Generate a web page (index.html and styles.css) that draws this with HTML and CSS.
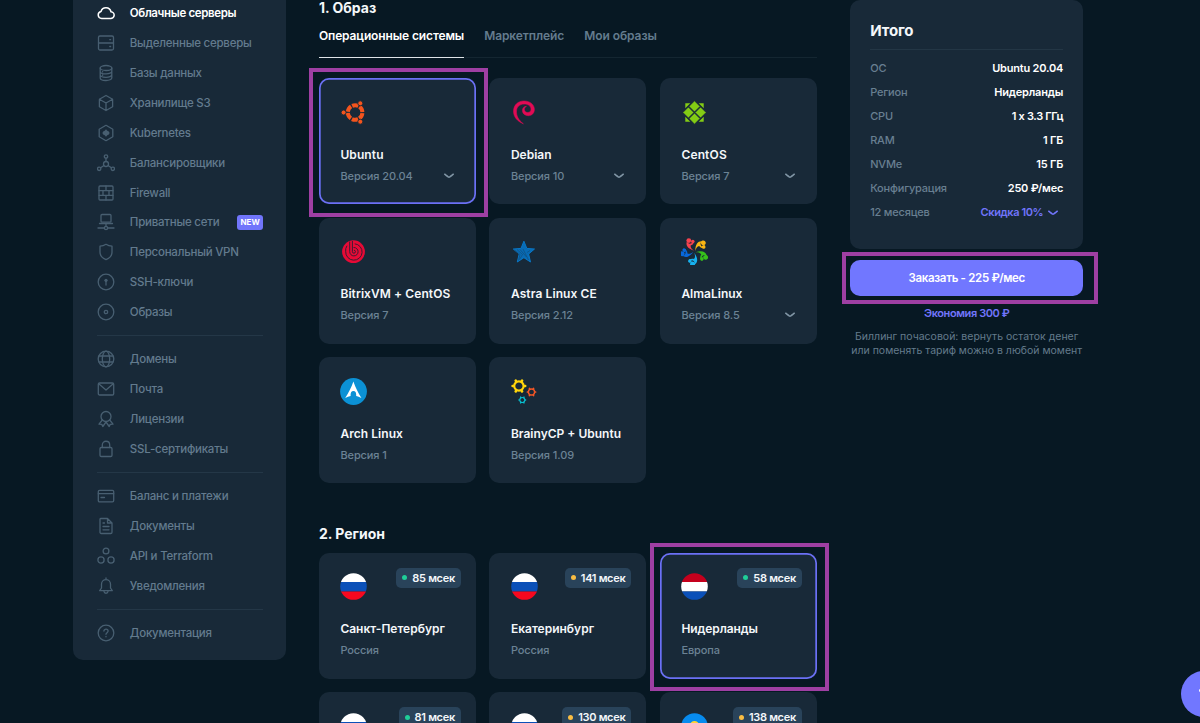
FILE: index.html
```html
<!DOCTYPE html>
<html lang="ru">
<head>
<meta charset="utf-8">
<title>Облачные серверы</title>
<link rel="stylesheet" href="styles.css">
</head>
<body>
<svg class="defs" aria-hidden="true">
  <symbol id="chev" viewBox="0 0 12 8"><path d="M1.700 2.200Q5.300 5.200 6 5.200Q6.700 5.200 10.300 2.200" fill="none" stroke="currentColor" stroke-width="1.500" stroke-linecap="round"/></symbol>
  <symbol id="flag-ru" viewBox="0 0 27 27"><clipPath id="c1"><circle cx="13.5" cy="13.5" r="13.3"/></clipPath><g clip-path="url(#c1)"><path fill="#fff" d="M0 0h27v9H0z"/><path fill="#0b50b8" d="M0 9h27v9.5H0z"/><path fill="#f6081f" d="M0 18.5h27V27H0z"/></g></symbol>
</svg>
<div class="page">
  <nav class="side">
    <a class="item active"><svg viewBox="0 0 18 18"><path d="M4.700 14.500h8.800a3.400 3.400 0 0 0 .5-6.800A5.200 5.200 0 0 0 4 7.400a3.600 3.600 0 0 0 .7 7.100z"/></svg><span>Облачные серверы</span></a>
    <a class="item"><svg viewBox="0 0 18 18"><rect x="1.5" y="2" width="15" height="14" rx="1.5"/><path d="M1.500 9h15M12.800 5.700h.8M12.800 12.500h.8"/></svg><span>Выделенные серверы</span></a>
    <a class="item"><svg viewBox="0 0 18 18"><ellipse cx="9" cy="4" rx="5.800" ry="2.500"/><path d="M3.200 4v10c0 1.400 2.600 2.500 5.800 2.500s5.800-1.100 5.800-2.500V4M3.200 7.400c0 1.400 2.600 2.500 5.800 2.500s5.800-1.100 5.800-2.500M3.200 10.800c0 1.400 2.600 2.500 5.800 2.500s5.800-1.100 5.800-2.500M5.600 7.600v.3M5.600 11v.3"/></svg><span>Базы данных</span></a>
    <a class="item"><svg viewBox="0 0 18 18"><path d="M9 1.500l6.600 3.700v7.600L9 16.500l-6.600-3.700V5.200zM2.400 5.200L9 9l6.600-3.800M9 9v7.500"/></svg><span>Хранилище S3</span></a>
    <a class="item"><svg viewBox="0 0 18 18"><path d="M9 1.300l6.800 3.900v7.600L9 16.700l-6.800-3.900V5.200z"/><path class="solid" d="M9 5.200l1.300 1.500 1.500.9.800 1.400-.8 1.400-1.500.9L9 12.800l-1.300-1.500-1.500-.9L5.400 9l.8-1.400 1.500-.9z"/></svg><span>Kubernetes</span></a>
    <a class="item"><svg viewBox="0 0 18 18"><circle cx="9" cy="2.500" r="1.700"/><circle cx="9" cy="10" r="2.500"/><circle cx="2.200" cy="14.800" r="1.700"/><circle cx="15.800" cy="14.800" r="1.700"/><path d="M9 4.200v3.300M7 11.500l-3.400 2.300M11 11.500l3.400 2.300"/></svg><span>Балансировщики</span></a>
    <a class="item"><svg viewBox="0 0 18 18"><rect x="2" y="2" width="14" height="14" rx="1"/><path d="M2 6.700h14M2 11.300h14M9 2v4.700M6 6.700v4.600M12 6.700v4.600M9 11.300V16"/></svg><span>Firewall</span></a>
    <a class="item"><svg viewBox="0 0 18 18"><rect x="4" y="1.500" width="10" height="7.700" rx="1"/><path d="M2.500 10.500h13M9 10.500v3M1 15h6.200M10.800 15H17"/><circle cx="9" cy="15" r="1.600"/></svg><span>Приватные сети</span><b class="new">NEW</b></a>
    <a class="item"><svg viewBox="0 0 18 18"><path d="M9 1.300c2 1.300 4 1.800 6 1.900v6c0 3.600-2.500 6-6 7.500-3.500-1.500-6-3.900-6-7.500v-6c2-.1 4-.6 6-1.900z"/></svg><span>Персональный VPN</span></a>
    <a class="item"><svg viewBox="0 0 18 18"><circle cx="9" cy="9" r="7.800"/><circle class="solid" cx="9" cy="7.300" r="1.600"/><path d="M9 7.500V12"/></svg><span>SSH-ключи</span></a>
    <a class="item"><svg viewBox="0 0 18 18"><circle cx="9" cy="9" r="7.800"/><circle cx="9" cy="9" r="1.700"/></svg><span>Образы</span></a>
    <hr>
    <a class="item"><svg viewBox="0 0 18 18"><circle cx="9" cy="9" r="7.800"/><ellipse cx="9" cy="9" rx="3.700" ry="7.800"/><path d="M2.200 6h13.600M2.200 12h13.600"/></svg><span>Домены</span></a>
    <a class="item"><svg viewBox="0 0 18 18"><rect x="1.300" y="3" width="15.400" height="12" rx="1.300"/><path d="M2 4l7 6 7-6"/></svg><span>Почта</span></a>
    <a class="item"><svg viewBox="0 0 18 18"><circle cx="9" cy="6.500" r="5"/><path d="M5.300 10l-3.300 4.200 2.800.2 1 2.100L9 12l3.200 4.500 1-2.100 2.800-.2-3.300-4.200"/></svg><span>Лицензии</span></a>
    <a class="item"><svg viewBox="0 0 18 18"><rect x="3" y="7.500" width="12" height="9" rx="1.300"/><path d="M5.300 7.500V5c0-5 7.400-5 7.400 0v2.500"/></svg><span>SSL-сертификаты</span></a>
    <hr>
    <a class="item"><svg viewBox="0 0 18 18"><rect x="1.300" y="3.300" width="15.400" height="11.500" rx="1.300"/><path d="M1.300 6.700h15.400M4 10.500h3.500"/></svg><span>Баланс и платежи</span></a>
    <a class="item"><svg viewBox="0 0 18 18"><path d="M3.700 1.500h6.800l4.500 4.500v9.200c0 .8-.5 1.300-1.300 1.300H4.300c-.8 0-1.300-.5-1.300-1.300V2.200c0-.5.2-.7.700-.7zM10.500 1.500V6H15M6 6h1.500M6 9.500h6M6 12.800h6"/></svg><span>Документы</span></a>
    <a class="item"><svg viewBox="0 0 18 18"><circle cx="9" cy="4" r="2.900"/><circle cx="4" cy="13" r="3.100"/><circle cx="14" cy="13" r="3.100"/></svg><span>API и Terraform</span></a>
    <a class="item"><svg viewBox="0 0 18 18"><path d="M9 1v1.700M4.500 11V7.200C4.500 4.500 6.500 2.700 9 2.700s4.500 1.800 4.500 4.500V11l1.800 2.700H2.700zM7 14.500c.2 2.300 3.800 2.300 4 0"/></svg><span>Уведомления</span></a>
    <hr>
    <a class="item"><svg viewBox="0 0 18 18"><circle cx="9" cy="9" r="7.800"/><path d="M6.900 7.100c0-2.600 4.200-2.500 4.200 0 0 1.500-2.100 1.600-2.100 3.200M9 12.400v.4"/></svg><span>Документация</span></a>
  </nav>

  <main class="main">
    <h2 class="h-image">1. Образ</h2>
    <div class="tabs"><span class="tab on">Операционные системы</span><span class="tab">Маркетплейс</span><span class="tab">Мои образы</span></div>
    <div class="grid">
      <div class="card sel"><div class="mark"></div>
        <svg class="logo" viewBox="0 0 27 27"><g transform="translate(.8 0)"><circle cx="14.300" cy="13.500" r="7.300" fill="none" stroke="#f4541d" stroke-width="4" stroke-dasharray="6.400 1.245" stroke-dashoffset="-.6"/><g fill="#f4541d" stroke="#182938" stroke-width=".9"><circle cx="2.800" cy="13.500" r="2.500"/><circle cx="19.500" cy="4.300" r="2.500"/><circle cx="19.500" cy="22.700" r="2.500"/></g></g></svg>
        <h3 class="n-ubuntu">Ubuntu</h3><p><span>Версия 20.04</span><svg class="chev"><use href="#chev"/></svg></p></div>
      <div class="card">
        <svg class="logo" viewBox="0 0 27 27"><path d="M12.400 24.800C6 22.200 2.300 17.500 2.500 11.800 2.800 5.800 7 2 13 2c6.200 0 10.400 3.700 10.400 8.500 0 3.600-2.600 6.200-6.100 6.200-3.300 0-5.900-2.200-5.900-5.200 0-2.400 1.700-4.100 4.100-4.200-1.600.8-2.200 2-2.100 3.300.2 1.900 1.700 3 3.500 2.900 2-.1 3.200-1.500 3.100-3.500-.2-3-2.800-4.900-6.700-4.900-4.600 0-7.600 2.700-7.800 6.900-.2 5 2.200 9.400 6.900 12.800z" fill="#e10b55" stroke="#e10b55" stroke-width=".5"/></svg>
        <h3 class="n-debian">Debian</h3><p><span>Версия 10</span><svg class="chev"><use href="#chev"/></svg></p></div>
      <div class="card">
        <svg class="logo" viewBox="0 0 27 27"><g fill="#83cc14"><path d="M4.300 4.300h5L4.300 9.300zM22.700 4.300v5l-5-5zM4.300 22.700v-5l5 5zM22.700 22.700h-5l5-5z"/><g stroke="#182938" stroke-width=".9" stroke-linejoin="round"><path d="M13.500 1.800l5.600 5.600-5.600 5.600-5.600-5.600zM13.500 14l5.600 5.600-5.600 5.600-5.600-5.600zM7.400 7.900l5.600 5.600-5.600 5.600-5.600-5.600zM19.600 7.900l5.600 5.600-5.600 5.600-5.600-5.600z"/></g></g></svg>
        <h3 class="n-centos">CentOS</h3><p><span>Версия 7</span><svg class="chev"><use href="#chev"/></svg></p></div>
      <div class="card">
        <svg class="logo" viewBox="0 0 27 27"><circle cx="13.500" cy="13.700" r="11.400" fill="#e70a36"/><g fill="none" stroke="#3a1c33" stroke-width="1"><path d="M9.700 3.500v10.200a4.200 4.200 0 1 0 4.200-4.200h-.4"/><path d="M12.400 3v10.700a1.500 1.500 0 1 0 1.500-1.500"/><path d="M7 7.700a8.500 8.500 0 0 0-1.300 6 8.200 8.200 0 1 0 9-7.900"/></g></svg>
        <h3 class="n-bitrix">BitrixVM + CentOS</h3><p><span>Версия 7</span></p></div>
      <div class="card">
        <svg class="logo" viewBox="0 0 27 27"><path d="M12.900 3.200l2.900 7.200 7.700.6-5.900 5 1.900 8-6.600-4.300L6.300 24l1.900-8-5.900-5 7.700-.6z" fill="#086bb5" stroke="#0876c5" stroke-linejoin="round"/><path d="M3.500 12l5.500 4.500-1.500 6M6 11.500l5.500 5-3 5M9 11.500l6.500 7.500M12 11l5.500 11M19 12.500l-3 2" fill="none" stroke="#174264" stroke-width=".5"/></svg>
        <h3 class="n-astra">Astra Linux CE</h3><p><span>Версия 2.12</span></p></div>
      <div class="card">
        <svg class="logo" viewBox="0 0 27 27"><defs><g id="alma"><path d="M13.100 12.700C6.300 10.500 4.400 6.800 6 3.300c.6 1.700 1.700 2.600 3.700 2.300L13 4c-.5 2-1.900 3.200-3.400 3.500-.1 2.100.9 3.500 3.500 5.200z"/><circle cx="7.800" cy="2.600" r="2.400"/><circle cx="11.800" cy="3.500" r="1.800"/></g></defs><use href="#alma" fill="#f6424e"/><use href="#alma" fill="#f9b513" transform="rotate(72 13.500 13.700)"/><use href="#alma" fill="#36c21b" transform="rotate(144 13.500 13.700)"/><use href="#alma" fill="#17b2f0" transform="rotate(216 13.500 13.700)"/><use href="#alma" fill="#0868db" transform="rotate(288 13.500 13.700)"/></svg>
        <h3 class="n-alma">AlmaLinux</h3><p><span>Версия 8.5</span><svg class="chev"><use href="#chev"/></svg></p></div>
      <div class="card">
        <svg class="logo" viewBox="0 0 27 27"><circle cx="13.500" cy="13.500" r="13.400" fill="#0b91d5"/><path d="M13.400 3.500c2.200 6.200 4.600 11.300 8 16.500-2-.9-3.600-1.500-5.200-1.900.3-3.200-.7-5.100-2.800-5.100s-3.100 1.900-2.800 5.100c-1.700.4-3.500 1.100-5.400 1.900 3.500-5.200 6-10.300 8.200-16.500z" fill="#fff"/></svg>
        <h3 class="n-arch">Arch Linux</h3><p><span>Версия 1</span></p></div>
      <div class="card">
        <svg class="logo" viewBox="0 0 27 27"><defs><g id="gear"><circle r="4.700" fill="none" stroke="currentColor" stroke-width="2.200"/><path d="M5.800 0h.5M-5.800 0h-.5M2.900-5l.3-.5M-2.900-5l-.3-.5M2.900 5l.3.5M-2.900 5l-.3.5" stroke="currentColor" stroke-width="2.600" stroke-linecap="round"/></g></defs><use href="#gear" color="#ffd50b" transform="translate(7.900 8)"/><use href="#gear" color="#f35726" transform="translate(20.500 14) scale(.65)"/><use href="#gear" color="#08bfd0" transform="translate(11.300 22) scale(.53)"/></svg>
        <h3 class="n-brainy">BrainyCP + Ubuntu</h3><p><span>Версия 1.09</span></p></div>
    </div>
    <h2 class="h-region">2. Регион</h2>
    <div class="grid">
      <div class="card"><svg class="logo"><use href="#flag-ru"/></svg><b class="ping">85 мсек</b><h3>Санкт-Петербург</h3><p><span>Россия</span></p></div>
      <div class="card"><svg class="logo"><use href="#flag-ru"/></svg><b class="ping slow">141 мсек</b><h3>Екатеринбург</h3><p><span>Россия</span></p></div>
      <div class="card sel"><div class="mark"></div><svg class="logo" viewBox="0 0 27 27"><g clip-path="url(#c1)"><path fill="#c5001d" d="M0 0h27v9H0z"/><path fill="#fff" d="M0 9h27v9.500H0z"/><path fill="#0b50b8" d="M0 18.500h27V27H0z"/></g></svg><b class="ping">58 мсек</b><h3 class="n-nl">Нидерланды</h3><p><span>Европа</span></p></div>
      <div class="card"><svg class="logo"><use href="#flag-ru"/></svg><b class="ping">81 мсек</b></div>
      <div class="card"><svg class="logo"><use href="#flag-ru"/></svg><b class="ping slow">130 мсек</b></div>
      <div class="card"><svg class="logo" viewBox="0 0 27 27"><circle cx="13.500" cy="13.500" r="13.300" fill="#078bee"/><circle cx="13.500" cy="12.500" r="4.500" fill="#ffd432"/></svg><b class="ping slow">138 мсек</b></div>
    </div>
  </main>

  <aside class="order">
    <section class="total">
      <h2>Итого</h2>
      <dl>
        <div><dt>ОС</dt><dd>Ubuntu 20.04</dd></div>
        <div><dt>Регион</dt><dd>Нидерланды</dd></div>
        <div><dt>CPU</dt><dd class="cpu">1 x 3.3 ГГц</dd></div>
        <div><dt>RAM</dt><dd>1 ГБ</dd></div>
        <div><dt>NVMe</dt><dd>15 ГБ</dd></div>
        <div><dt>Конфигурация</dt><dd>250 ₽/мес</dd></div>
        <div><dt>12 месяцев</dt><dd class="sale">Скидка 10%<svg class="chev"><use href="#chev"/></svg></dd></div>
      </dl>
    </section>
    <div class="buy"><div class="mark"></div><button>Заказать - 225 ₽/мес</button></div>
    <div class="save">Экономия 300 ₽</div>
    <div class="note"><span>Биллинг почасовой: вернуть остаток денег</span><br><span>или поменять тариф можно в любой момент</span></div>
  </aside>
</div>
<div class="chat"><i></i></div>
</body>
</html>
```
FILE: styles.css
```css
* { box-sizing: border-box; }
html, body { height: 723px; overflow: hidden; }
body { margin: 0; background: #071823; font-family: Inter, "Noto Sans", sans-serif; color: #f4f7fa; position: relative; }
.defs { position: absolute; width: 0; height: 0; }
h2, h3, p, dl, dd { margin: 0; }
.page { display: grid; grid-template-columns: 212.300px 498px 233px; column-gap: 33.300px; padding-left: 73.300px; align-items: start; height: 723px; overflow: hidden; }

.side { height: 659.500px; background: #182938; border-radius: 0 0 10px 10px; padding: 0 22.500px 0 24px; overflow: hidden; }
.side::before { content: ""; display: block; margin-top: -1.700px; }
.item { display: flex; align-items: center; height: 29.900px; color: #637b8e; font-size: 11.500px; letter-spacing: -.23px; font-weight: 500; white-space: nowrap; }
.item svg { flex: none; width: 18px; height: 18px; margin-right: 14.500px; fill: none; stroke: #485f71; stroke-width: 1.300; stroke-linejoin: round; stroke-linecap: round; }
.item svg .solid { fill: #485f71; stroke: none; }
.item.active { color: #fff; font-weight: 600; letter-spacing: -.35px; }
.item.active svg { stroke: #fff; stroke-width: 1.500; }
.side hr { border: 0; border-top: 1px solid #243747; margin: 8px 0 8.300px; }
.new { margin-left: auto; width: 26px; height: 15px; border-radius: 3px; background: #7175fb; color: #fff; font-size: 8px; font-weight: 700; line-height: 15px; letter-spacing: 0; text-align: center; }

.main h2 { font-size: 14px; line-height: 18px; font-weight: 700; }
.main .h-image { line-height: 15px; height: 16px; }
.tabs { display: flex; gap: 20px; height: 42px; border-bottom: 1px solid #142631; margin-bottom: 20px; padding-top: 10px; letter-spacing: -.08px; }
.tab { height: 32px; line-height: 19px; font-size: 12px; font-weight: 600; color: #647c8e; white-space: nowrap; }
.tab.on { color: #fff; border-bottom: 1px solid #dfe4e8; letter-spacing: -.12px; }
.grid { display: grid; grid-template-columns: repeat(3, 1fr); grid-auto-rows: 126px; gap: 13.500px; }
.card { position: relative; background: #182938; border-radius: 10px; padding: 20.500px 21px 0 21.500px; }
.card.sel { box-shadow: inset 0 0 0 1.700px #6b70f5; z-index: 1; }
.mark { position: absolute; inset: -10px -12px -12.500px -10px; border: 4px solid #9e3fa3; }
.logo { display: block; width: 27px; height: 27px; }
.card h3 { font-size: 12px; line-height: 18px; font-weight: 600; margin-top: 20.300px; white-space: nowrap; }
.card .n-ubuntu { letter-spacing: .1px; }
.card .n-centos { letter-spacing: .15px; }
.card .n-bitrix { letter-spacing: .08px; }
.card .n-astra { letter-spacing: .1px; }
.card .n-arch { letter-spacing: .05px; }
.card .n-nl { letter-spacing: -.1px; }
.card p { display: flex; justify-content: space-between; align-items: center; font-size: 11px; line-height: 18px; letter-spacing: -.1px; font-weight: 500; color: #6b8294; margin-top: 3px; }
.chev { width: 12px; height: 8px; color: #8095a5; }
.main .h-region { margin: 41.500px 0 10px; }
.ping { position: absolute; right: 15px; top: 15px; height: 20px; border-radius: 5px; background: #29435a; padding: 0 6px; display: flex; align-items: center; font-size: 11px; line-height: 14px; letter-spacing: -.3px; font-weight: 600; }
.ping::before { content: ""; width: 5px; height: 5px; border-radius: 50%; background: #1fce98; margin-right: 5px; }
.ping.slow::before { background: #f9bd43; }

.total { background: #182938; border-radius: 10px; height: 249px; padding: 20px 20px 0; }
.total h2 { font-size: 15px; line-height: 21px; font-weight: 700; letter-spacing: -.1px; padding-bottom: 8px; border-bottom: 1px solid #233645; }
.total dl { padding-top: 6px; }
.total dl div { display: flex; justify-content: space-between; line-height: 24px; font-size: 11px; letter-spacing: -.2px; }
.total dt { color: #687f91; font-weight: 500; }
.total dd { font-weight: 600; color: #fff; }
.total dd.cpu { font-variant-ligatures: none; font-feature-settings: "calt" 0; letter-spacing: -.35px; }
.total dd.sale { color: #7175fb; padding-right: 4px; letter-spacing: -.4px; }
.sale .chev { color: #7175fb; margin-left: 4px; vertical-align: -1px; }
.buy { position: relative; margin-top: 10.500px; }
.buy .mark { inset: -8px -15px -7.500px -8px; }
button { display: block; width: 100%; height: 36.500px; border: 0; border-radius: 10px; background: #7177ff; color: #fff; font: 600 11.500px Inter, sans-serif; letter-spacing: -.3px; }
.save { margin-top: 8px; text-align: center; line-height: 18px; font-size: 11px; font-weight: 600; letter-spacing: -.4px; color: #7175fb; }
.note { margin-top: 8px; text-align: center; font-size: 10.500px; line-height: 13.500px; color: #647b8c; white-space: nowrap; }
.chat { position: absolute; left: 1180.500px; top: 671px; width: 46px; height: 46px; border-radius: 50%; background: #7177ff; }
.chat i { position: absolute; left: 18px; top: 18px; width: 8px; height: 3px; border-radius: 2px; background: #fff; }
```
